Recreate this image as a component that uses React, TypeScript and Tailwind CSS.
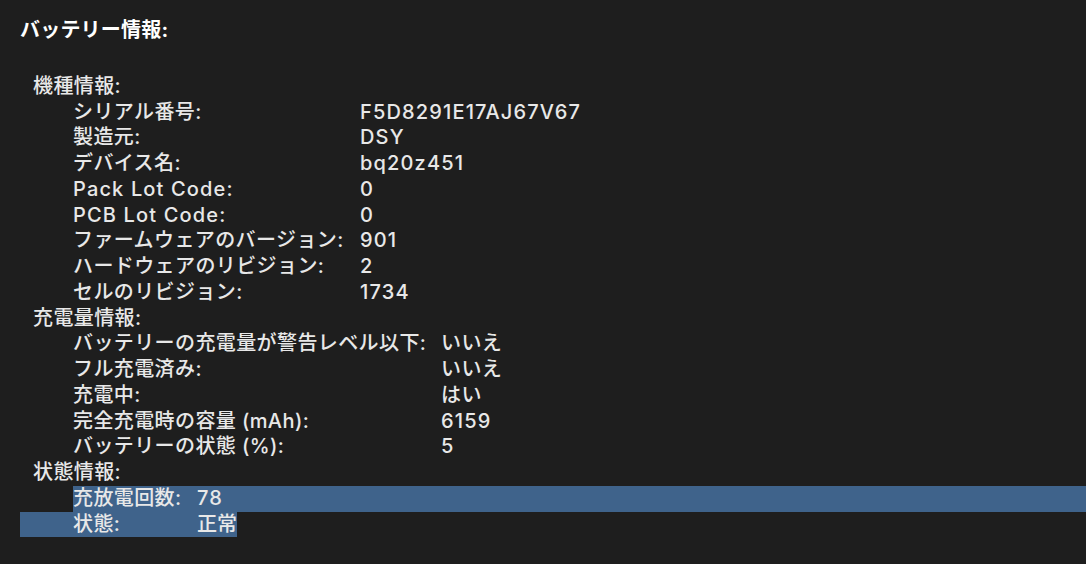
type Row = { label: string; value: string };

const modelInfo: Row[] = [
  { label: "シリアル番号:", value: "F5D8291E17AJ67V67" },
  { label: "製造元:", value: "DSY" },
  { label: "デバイス名:", value: "bq20z451" },
  { label: "Pack Lot Code:", value: "0" },
  { label: "PCB Lot Code:", value: "0" },
  { label: "ファームウェアのバージョン:", value: "901" },
  { label: "ハードウェアのリビジョン:", value: "2" },
  { label: "セルのリビジョン:", value: "1734" },
];

const chargeInfo: Row[] = [
  { label: "バッテリーの充電量が警告レベル以下:", value: "いいえ" },
  { label: "フル充電済み:", value: "いいえ" },
  { label: "充電中:", value: "はい" },
  { label: "完全充電時の容量 (mAh):", value: "6159" },
  { label: "バッテリーの状態 (%):", value: "5" },
];

// latin text in the reference is set wider than Inter
function track(text: string) {
  return /^[\x00-\x7F]+$/.test(text) ? "tracking-[1.15px]" : "tracking-[0.4px]";
}

function Section({
  title,
  rows,
  labelWidth,
}: {
  title: string;
  rows: Row[];
  labelWidth: string;
}) {
  return (
    <div>
      <div className="pl-[33px] tracking-[0.4px]">{title}</div>
      {rows.map((r) => (
        <div key={r.label} className="flex pl-[73px]">
          <span className={labelWidth + " shrink-0 whitespace-nowrap " + track(r.label)}>
            {r.label}
          </span>
          <span className={"whitespace-nowrap " + track(r.value)}>{r.value}</span>
        </div>
      ))}
    </div>
  );
}

export default function App() {
  return (
    <div
      className="h-[564px] w-[1086px] overflow-hidden bg-[#1e1e1e] text-[20px] font-medium leading-[25.75px] text-[#e8e8e8]"
      style={{ fontFamily: 'Inter, "Noto Sans CJK JP", sans-serif' }}
    >
      <div className="pl-[20px] pt-[18px] font-bold tracking-[0.2px] text-white">
        バッテリー情報:
      </div>
      <div className="mt-[30px]">
        <Section title="機種情報:" rows={modelInfo} labelWidth="w-[287px]" />
        <Section title="充電量情報:" rows={chargeInfo} labelWidth="w-[368px]" />
        <div className="tracking-[0.4px]">
          <div className="pl-[33px]">状態情報:</div>
          <div className="ml-[73px] flex bg-[#3f638b]">
            <span className="w-[124px] shrink-0">充放電回数:</span>
            <span className="tracking-[1.15px]">78</span>
          </div>
          <div className="ml-[20px] flex w-fit whitespace-nowrap bg-[#3f638b] pl-[53px]">
            <span className="w-[124px] shrink-0">状態:</span>
            <span className="tracking-normal">正常</span>
          </div>
        </div>
      </div>
    </div>
  );
}
